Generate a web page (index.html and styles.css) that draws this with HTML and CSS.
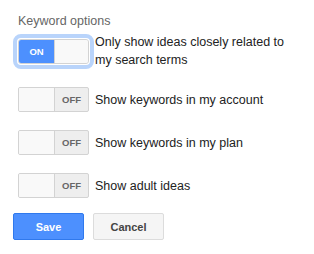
FILE: index.html
```html
<!DOCTYPE html>
<html lang="en">
<head>
  <meta charset="UTF-8" />
  <title>Keyword options</title>
  <link rel="stylesheet" href="styles.css">
</head>
<body>
  <div class="panel">
    <div class="title">Keyword options</div>

    <ul class="options">
      <li class="option">
        <span class="switch on focused"><span class="state">ON</span><span class="knob"></span></span>
        <span class="text">Only show ideas closely related to my search terms</span>
      </li>
      <li class="option">
        <span class="switch"><span class="knob"></span><span class="state">OFF</span></span>
        <span class="text">Show keywords in my account</span>
      </li>
      <li class="option">
        <span class="switch"><span class="knob"></span><span class="state">OFF</span></span>
        <span class="text">Show keywords in my plan</span>
      </li>
      <li class="option">
        <span class="switch"><span class="knob"></span><span class="state">OFF</span></span>
        <span class="text">Show adult ideas</span>
      </li>
    </ul>

    <div class="actions">
      <button class="btn btn-primary">Save</button>
      <button class="btn">Cancel</button>
    </div>
  </div>
</body>
</html>
```

FILE: styles.css
```css
body {
  margin: 0;
  background: #fff;
  font-family: "Liberation Sans", Arial, sans-serif;
  color: #222;
}
.panel {
  width: 314px;
  box-sizing: border-box;
  padding: 14px 20px 0 13px;
}
.title {
  margin-left: 5px;
  font-size: 12.5px;
  line-height: 15px;
  color: #666;
}
.options {
  list-style: none;
  margin: 4px 0 0;
  padding: 0 0 0 5px;
  display: flex;
  flex-direction: column;
  gap: 18px;
}
.option {
  display: flex;
  align-items: center;
  gap: 6px;
  min-height: 25px;
}
.text {
  font-size: 12.5px;
  line-height: 18px;
}
.switch {
  flex: none;
  display: flex;
  width: 71px;
  height: 25px;
  box-sizing: border-box;
  border: 1px solid #d3d3d3;
  border-radius: 2px;
  background: #eee;
  overflow: hidden;
}
.switch.focused {
  outline: 4px solid #b9d4fb;
  outline-offset: 1px;
  border-radius: 3px;
}
.knob {
  width: 35px;
  background: #f9f9f9;
  border-right: 1px solid #d3d3d3;
}
.switch.on .knob {
  flex: 1;
  border-right: none;
  border-left: 1px solid #d3d3d3;
}
.state {
  flex: 1;
  display: flex;
  align-items: center;
  justify-content: center;
  font-size: 9.5px;
  font-weight: bold;
  color: #666;
}
.switch.on .state {
  flex: none;
  width: 35px;
  background: #4d90fe;
  color: #fff;
}
.actions {
  display: flex;
  gap: 9px;
  margin-top: 15px;
}
.btn {
  width: 71px;
  height: 27px;
  border: 1px solid #dcdcdc;
  border-radius: 2px;
  background: #f5f5f5;
  color: #444;
  font-family: "Liberation Sans", Arial, sans-serif;
  font-size: 11px;
  font-weight: bold;
  padding: 0;
}
.btn-primary {
  background: #4d90fe;
  border-color: #3079ed;
  color: #fff;
}
```
